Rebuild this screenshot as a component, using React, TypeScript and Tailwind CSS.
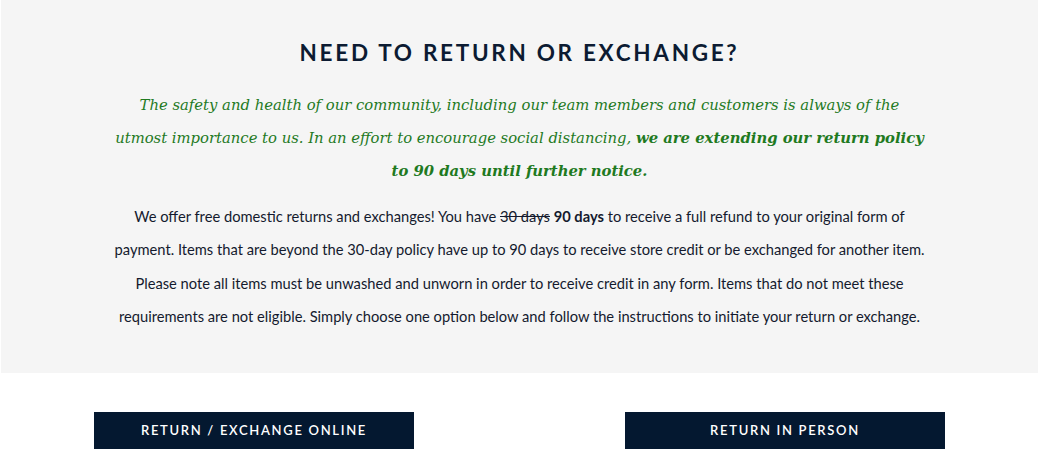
export default function App() {
  return (
    <div className="w-[1039px] h-[466px] bg-white overflow-hidden">
      <section className="mx-[1px] h-[373px] bg-[#f5f5f5] flex flex-col items-center pt-[38px]">
        <h2 className="font-['Lato',sans-serif] font-bold text-[22.5px] leading-[30px] tracking-[0.12em] text-[#0c1b32]">
          NEED TO RETURN OR EXCHANGE?
        </h2>
        <p className="mt-[20px] text-center whitespace-nowrap font-['DejaVu_Serif',serif] italic text-[14.8px] leading-[33px] text-[#1f7a1f]">
          The safety and health of our community, including our team members and customers is always of the
          <br />
          utmost importance to us. In an effort to encourage social distancing,{' '}
          <span className="font-bold">we are extending our return policy</span>
          <br />
          <span className="font-bold">to 90 days until further notice.</span>
        </p>
        <p className="mt-[13px] text-center whitespace-nowrap font-['Lato',sans-serif] text-[14.7px] leading-[33.3px] text-[#141a2e]">
          We offer free domestic returns and exchanges! You have <span className="line-through">30 days</span>{' '}
          <span className="font-bold">90 days</span> to receive a full refund to your original form of
          <br />
          payment. Items that are beyond the 30-day policy have up to 90 days to receive store credit or be exchanged for another item.
          <br />
          Please note all items must be unwashed and unworn in order to receive credit in any form. Items that do not meet these
          <br />
          requirements are not eligible. Simply choose one option below and follow the instructions to initiate your return or exchange.
        </p>
      </section>
      <div className="flex justify-between pl-[94px] pr-[94px] pt-[39px]">
        <button className="w-[320px] h-[37px] bg-[#041830] text-white font-['Lato',sans-serif] font-semibold text-[13px] tracking-[0.13em]">
          RETURN / EXCHANGE ONLINE
        </button>
        <button className="w-[320px] h-[37px] bg-[#041830] text-white font-['Lato',sans-serif] font-semibold text-[13px] tracking-[0.13em]">
          RETURN IN PERSON
        </button>
      </div>
    </div>
  );
}
